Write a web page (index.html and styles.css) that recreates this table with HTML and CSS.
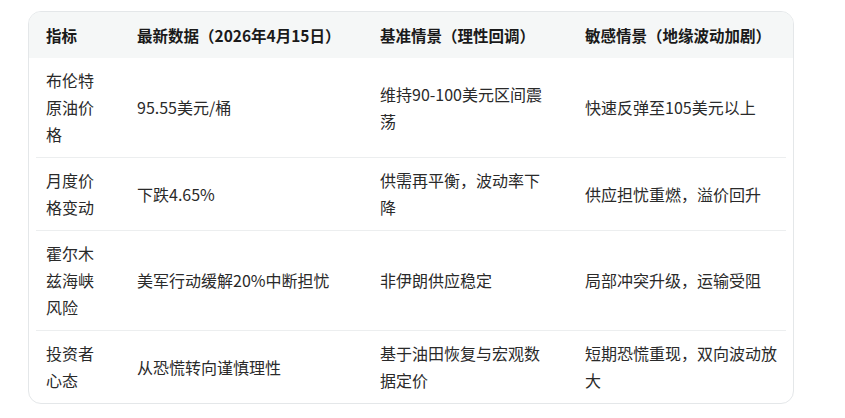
FILE: index.html
```html
<!DOCTYPE html>
<html lang="zh-CN">
<head>
<meta charset="utf-8">
<title>布伦特原油情景分析</title>
<link rel="stylesheet" href="styles.css">
</head>
<body>
<div class="card">
  <div class="head">
    <div class="cell c1">指标</div>
    <div class="cell c2">最新数据（2026年4月15日）</div>
    <div class="cell c3">基准情景（理性回调）</div>
    <div class="cell c4">敏感情景（地缘波动加剧）</div>
  </div>
  <div class="row">
    <div class="cell c1">布伦特原油价格</div>
    <div class="cell c2">95.55美元/桶</div>
    <div class="cell c3">维持90-100美元区间震荡</div>
    <div class="cell c4">快速反弹至105美元以上</div>
  </div>
  <div class="row">
    <div class="cell c1">月度价格变动</div>
    <div class="cell c2">下跌4.65%</div>
    <div class="cell c3">供需再平衡，波动率下降</div>
    <div class="cell c4">供应担忧重燃，溢价回升</div>
  </div>
  <div class="row">
    <div class="cell c1">霍尔木兹海峡风险</div>
    <div class="cell c2">美军行动缓解20%中断担忧</div>
    <div class="cell c3">非伊朗供应稳定</div>
    <div class="cell c4">局部冲突升级，运输受阻</div>
  </div>
  <div class="row last">
    <div class="cell c1">投资者心态</div>
    <div class="cell c2">从恐慌转向谨慎理性</div>
    <div class="cell c3">基于油田恢复与宏观数据定价</div>
    <div class="cell c4">短期恐慌重现，双向波动放大</div>
  </div>
</div>
</body>
</html>
```
FILE: styles.css
```css
html, body {
  margin: 0;
  background: #ffffff;
}
body {
  padding: 11px 0 0 28px;
  font-family: "Noto Sans CJK SC", "Noto Sans", sans-serif;
  font-size: 16px;
  color: #2a2a2a;
}
.card {
  width: 764px;
  border: 1px solid #e4e7e9;
  border-radius: 13px;
  overflow: hidden;
}
.head, .row {
  display: grid;
  grid-template-columns: 91px 243px 205px 211px;
  align-items: center;
}
.head {
  background: #f5f7f7;
  padding: 0 7px;
  font-size: 15.5px;
  font-weight: 700;
  color: #1a1a1a;
}
.head .cell {
  padding-top: 10px;
  padding-bottom: 9px;
}
.row {
  margin: 0 7px;
  border-bottom: 1px solid #eceeef;
}
.row.last {
  border-bottom: none;
}
.cell {
  padding: 9px 10px;
  line-height: 27px;
}
.c1 {
  padding-right: 27px;
}
.c2 {
  padding-right: 20px;
}
.c3 {
  padding-right: 20px;
}
.c4 {
  padding-right: 0;
}
```
